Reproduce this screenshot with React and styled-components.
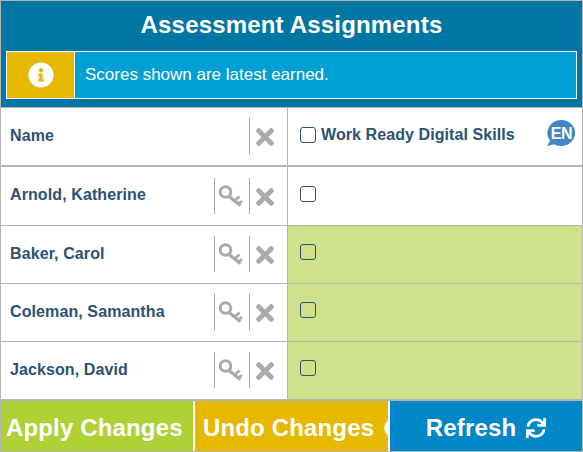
import React from "react";
import styled, { createGlobalStyle } from "styled-components";
import { FaInfoCircle, FaTimes, FaTimesCircle, FaSync } from "react-icons/fa";

const GlobalStyle = createGlobalStyle`
  html, body {
    margin: 0;
    padding: 0;
    background: #fff;
    font-family: "Liberation Sans", Arial, sans-serif;
  }
`;

const Page = styled.div`
  width: 583px;
  height: 452px;
  box-sizing: border-box;
  border: 1px solid #b5b5b5;
  border-bottom: none;
  display: flex;
  flex-direction: column;
  overflow: hidden;
`;

const Header = styled.div`
  height: 107px;
  flex: none;
  box-sizing: border-box;
  background: #0077a3;
  border-bottom: 1px solid #b5b5b5;
  padding: 0 5px;
  display: flex;
  flex-direction: column;
`;

const Title = styled.h1`
  margin: 0;
  height: 50px;
  line-height: 47px;
  font-size: 24px;
  font-weight: bold;
  letter-spacing: 0.18px;
  color: #fff;
  text-align: center;
`;

const Notice = styled.div`
  height: 48px;
  box-sizing: border-box;
  border: 1px solid #fff;
  display: flex;
  background: #009fd4;
`;

const NoticeIcon = styled.div`
  width: 67px;
  flex: none;
  background: #e6b800;
  border-right: 1px solid #fff;
  display: flex;
  align-items: center;
  justify-content: center;
  color: #fff;
  font-size: 26px;
`;

const NoticeText = styled.div`
  padding-left: 10px;
  line-height: 45px;
  font-size: 17px;
  color: #fff;
`;

const Row = styled.div`
  height: ${(p) => p.$height}px;
  flex: none;
  box-sizing: border-box;
  display: grid;
  grid-template-columns: 287px 1fr;
  border-bottom: ${(p) => p.$line}px solid #b5b5b5;
`;

const NameCell = styled.div`
  border-right: 1px solid #b5b5b5;
  padding: 0 0 1px 9px;
  display: flex;
  align-items: center;
`;

const Name = styled.div`
  flex: 1;
  padding-bottom: ${(p) => (p.$lift ? 2 : 0)}px;
  font-size: 16px;
  font-weight: bold;
  letter-spacing: 0.1px;
  color: #2c5273;
`;

const IconButton = styled.div`
  width: ${(p) => p.$width}px;
  height: 36px;
  flex: none;
  box-sizing: border-box;
  border-left: 1px solid #aaa;
  padding: 2px 0 0 ${(p) => p.$inset}px;
  display: flex;
  align-items: center;
  color: #aaa;
  font-size: 26px;
`;

const ScoreCell = styled.div`
  background: ${(p) => (p.$done ? "#cfe18b" : "#fff")};
  padding: 0 0 ${(p) => (p.$done ? 6 : 4)}px 12px;
  display: flex;
  align-items: center;
`;

const Check = styled.span`
  width: 14px;
  height: 14px;
  flex: none;
  border: 1px solid #2c5273;
  border-radius: 3px;
  background: ${(p) => (p.$tinted ? "transparent" : "#fff")};
`;

const AssessmentTitle = styled.div`
  flex: 1;
  margin-left: 5px;
  font-size: 16px;
  font-weight: bold;
  letter-spacing: 0.08px;
  color: #2c5273;
`;

const Lang = styled.span`
  margin: 0 6px 4px 0;
  display: flex;
`;

const Footer = styled.div`
  flex: 1;
  display: grid;
  grid-template-columns: 192px 193px 1fr;
  gap: 2px;
  border-bottom: 1px solid #b5b5b5;
`;

const ActionButton = styled.div`
  background: ${(p) => p.$bg};
  color: #fff;
  font-size: 24px;
  font-weight: bold;
  letter-spacing: 0.15px;
  white-space: nowrap;
  overflow: hidden;
  display: flex;
  align-items: center;
  justify-content: ${(p) => (p.$center ? "center" : "flex-start")};
  gap: 10px;
  padding-left: ${(p) => p.$pad || 0}px;
  padding-top: 4px;
  svg {
    flex: none;
    font-size: 20px;
  }
`;

const KeyIcon = () => (
  <svg width="25" height="24" viewBox="0 0 25 24" fill="none" stroke="#aaa">
    <circle cx="6.5" cy="7" r="5.3" strokeWidth="3" />
    <path d="M10 11.5 L21.5 20.5" strokeWidth="3.4" />
    <path d="M15.5 16 L20.5 11.5 M19.5 19 L23 16" strokeWidth="2.6" />
  </svg>
);

const EnBadge = () => (
  <svg width="30" height="28" viewBox="0 0 30 28">
    <path d="M15 1a14 13 0 1 1-7 24.2L1 27l3-5.5A14 13 0 0 1 15 1z" fill="#3f86c4" />
    <text x="15.5" y="19.5" textAnchor="middle" fontSize="16" fontWeight="bold" letterSpacing="-0.3" fontFamily="'Liberation Sans', sans-serif" fill="#fff">EN</text>
  </svg>
);

const people = [
  { name: "Arnold, Katherine", done: false, height: 59, line: 1 },
  { name: "Baker, Carol", done: true, height: 58, line: 1 },
  { name: "Coleman, Samantha", done: true, height: 58, line: 1 },
  { name: "Jackson, David", done: true, height: 59, line: 2 },
];

export default function App() {
  return (
    <Page>
      <GlobalStyle />
      <Header>
        <Title>Assessment Assignments</Title>
        <Notice>
          <NoticeIcon>
            <FaInfoCircle />
          </NoticeIcon>
          <NoticeText>Scores shown are latest earned.</NoticeText>
        </Notice>
      </Header>
      <Row $height={59} $line={2}>
        <NameCell>
          <Name>Name</Name>
          <IconButton $width={38} $inset={2}>
            <FaTimes />
          </IconButton>
        </NameCell>
        <ScoreCell>
          <Check />
          <AssessmentTitle>Work Ready Digital Skills</AssessmentTitle>
          <Lang>
            <EnBadge />
          </Lang>
        </ScoreCell>
      </Row>
      {people.map((p) => (
        <Row key={p.name} $height={p.height} $line={p.line}>
          <NameCell>
            <Name $lift={!p.done}>{p.name}</Name>
            <IconButton $width={35} $inset={4}>
              <KeyIcon />
            </IconButton>
            <IconButton $width={38} $inset={2}>
              <FaTimes />
            </IconButton>
          </NameCell>
          <ScoreCell $done={p.done}>
            <Check $tinted={p.done} />
          </ScoreCell>
        </Row>
      ))}
      <Footer>
        <ActionButton $bg="#aed135" $pad={5}>Apply Changes</ActionButton>
        <ActionButton $bg="#e6b800" $pad={8}>
          Undo Changes
          <FaTimesCircle />
        </ActionButton>
        <ActionButton $bg="#0087c7" $center>
          Refresh
          <FaSync />
        </ActionButton>
      </Footer>
    </Page>
  );
}
